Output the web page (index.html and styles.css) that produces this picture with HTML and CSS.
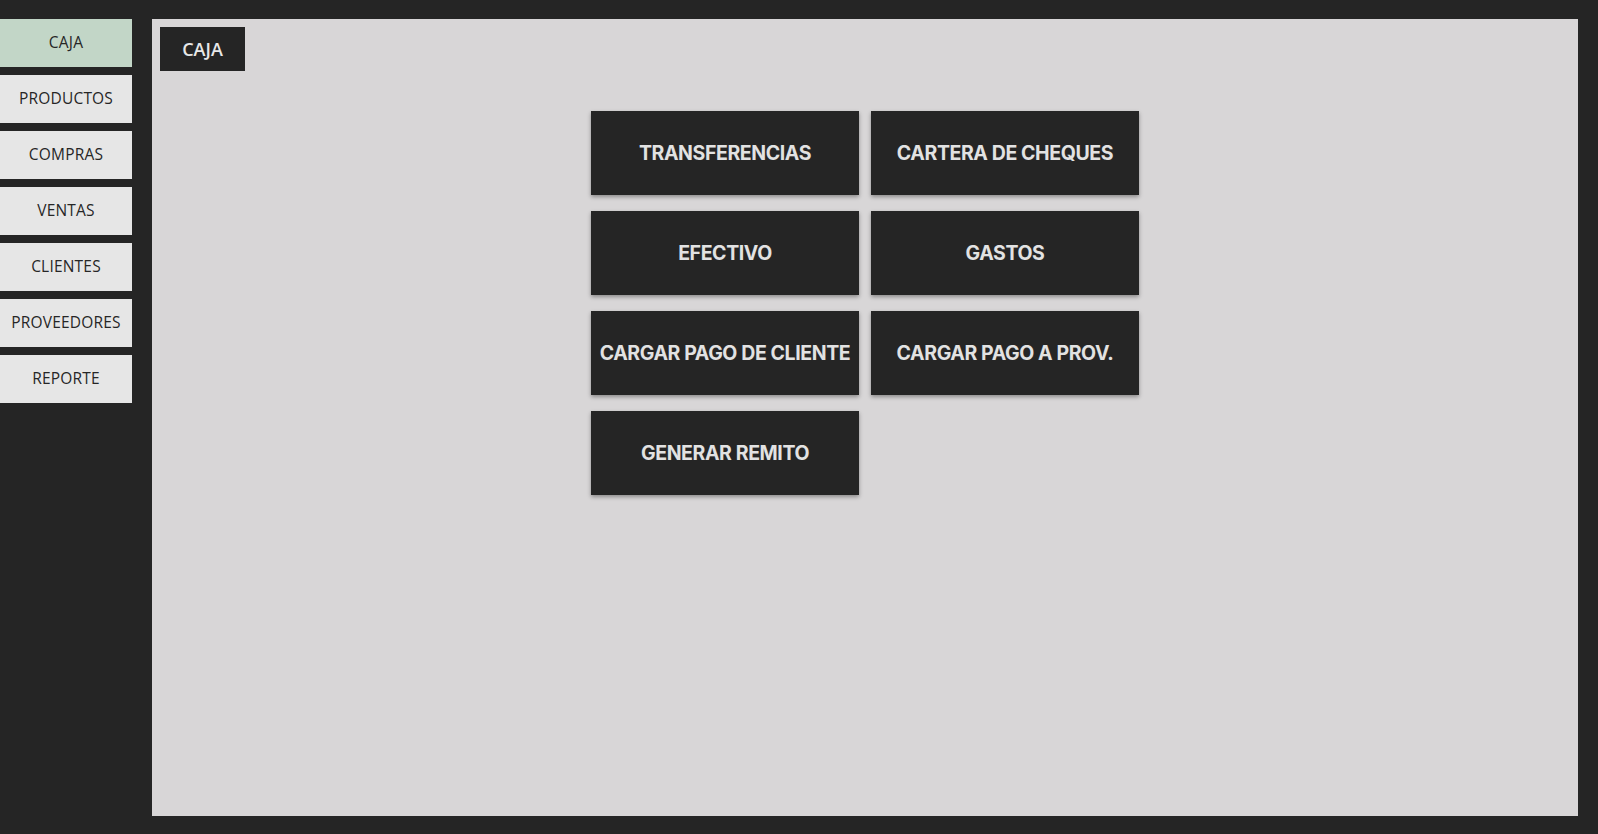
FILE: index.html
```html
<!DOCTYPE html>
<html>

<head>
	<meta charset="utf-8">
	<meta name="viewport" content="width=device-width, initial-scale=1.0">
	<title>Caja</title>
	<link rel="stylesheet" href="styles.css">
</head>

<body>
	<div class="app">
		<nav class="sidebar">
			<button class="nav-btn active">CAJA</button>
			<button class="nav-btn">PRODUCTOS</button>
			<button class="nav-btn">COMPRAS</button>
			<button class="nav-btn">VENTAS</button>
			<button class="nav-btn">CLIENTES</button>
			<button class="nav-btn">PROVEEDORES</button>
			<button class="nav-btn">REPORTE</button>
		</nav>
		<main class="panel">
			<div class="title">CAJA</div>
			<div class="grid">
				<button class="action">TRANSFERENCIAS</button>
				<button class="action">CARTERA DE CHEQUES</button>
				<button class="action">EFECTIVO</button>
				<button class="action">GASTOS</button>
				<button class="action">CARGAR PAGO DE CLIENTE</button>
				<button class="action">CARGAR PAGO A PROV.</button>
				<button class="action">GENERAR REMITO</button>
			</div>
		</main>
	</div>
</body>

</html>
```

FILE: styles.css
```css
* {
	margin: 0;
	padding: 0;
	box-sizing: border-box;
	font-family: "Open Sans", sans-serif;
}

body {
	width: 100%;
	height: 100vh;
	background: #252525;
	overflow: hidden;
}

.app {
	display: flex;
	gap: 20px;
	padding-top: 19px;
}

.sidebar {
	width: 132px;
	display: flex;
	flex-direction: column;
	gap: 8px;
}

.nav-btn {
	height: 48px;
	border: none;
	background: #e6e6e6;
	color: #262626;
	font-size: 15.5px;
	letter-spacing: .2px;
	padding-bottom: 3px;
}

.nav-btn.active {
	background: #c2d6c7;
}

.panel {
	width: 1426px;
	height: 797px;
	background: #d8d6d7;
	padding: 8px;
}

.title {
	display: inline-block;
	width: 85px;
	height: 44px;
	line-height: 44px;
	text-align: center;
	background: #252525;
	color: #e8e8e8;
	font-size: 18px;
	font-weight: 600;
}

.grid {
	display: grid;
	grid-template-columns: 268px 268px;
	column-gap: 12px;
	row-gap: 16px;
	justify-content: center;
	margin-top: 40px;
}

.action {
	height: 84px;
	border: none;
	background: #252525;
	color: #e2e2e2;
	font-family: Inter, sans-serif;
	font-weight: 700;
	font-size: 19.5px;
	letter-spacing: -.4px;
	box-shadow: 0 2px 4px rgba(0, 0, 0, .35);
}
```
